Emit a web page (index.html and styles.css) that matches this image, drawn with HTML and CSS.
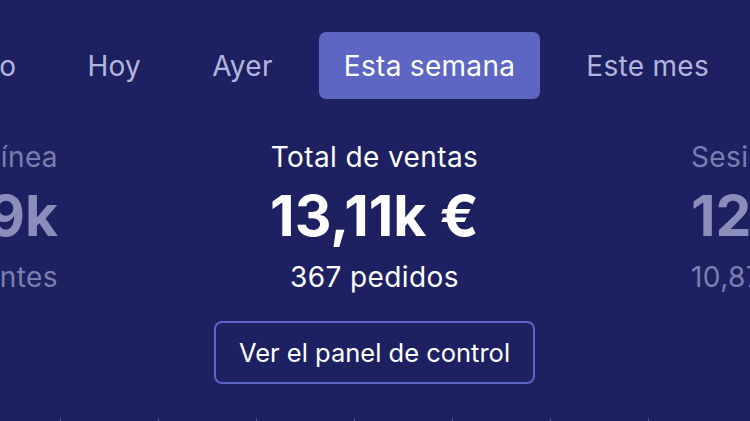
FILE: index.html
```html
<!DOCTYPE html>
<html lang="es">
<head>
    <meta charset="UTF-8">
    <meta name="viewport" content="width=device-width, initial-scale=1.0">
    <title>Resumen de ventas</title>
    <link rel="stylesheet" href="styles.css">
</head>
<body>
    <!-- Period tabs -->
    <nav class="tabs">
        <span class="tab">En vivo</span>
        <span class="tab">Hoy</span>
        <span class="tab">Ayer</span>
        <span class="tab active">Esta semana</span>
        <span class="tab">Este mes</span>
    </nav>

    <!-- Stats carousel -->
    <section class="stats">
        <div class="stat side left">
            <p class="label">Visitantes en línea</p>
            <p class="value">1,9k</p>
            <p class="sub">visitantes recientes</p>
        </div>
        <div class="stat main">
            <p class="label">Total de ventas</p>
            <p class="value">13,11k €</p>
            <p class="sub">367 pedidos</p>
            <button class="panel-btn">Ver el panel de control</button>
        </div>
        <div class="stat side right">
            <p class="label">Sesiones</p>
            <p class="value">12,4k</p>
            <p class="sub">10,87k visitantes</p>
        </div>
    </section>

    <!-- Chart axis -->
    <div class="axis">
        <span></span><span></span><span></span><span></span><span></span><span></span><span></span>
    </div>
</body>
</html>
```

FILE: styles.css
```css
body {
    margin: 0;
    height: 421px;
    overflow: hidden;
    background-color: #1d2161;
    font-family: Inter, "Open Sans", sans-serif;
    color: #ffffff;
}
p {
    margin: 0;
}
.tabs {
    display: flex;
    justify-content: flex-end;
    gap: 21px;
    padding: 0 16px 0 0;
    margin-top: 32px;
    overflow: hidden;
    white-space: nowrap;
}
.tab {
    flex: none;
    padding: 18px 25px 16px;
    font-size: 28px;
    line-height: 33px;
    letter-spacing: 0.3px;
    color: #b3b6dc;
    border-radius: 7px;
}
.tab.active {
    background-color: #5d67c3;
    color: #ffffff;
}
.stats {
    display: grid;
    grid-template-columns: 58px 1fr 59px;
    margin-top: 42px;
    white-space: nowrap;
}
.stat {
    display: flex;
    flex-direction: column;
    min-width: 0;
    overflow: hidden;
}
.stat.main {
    align-items: center;
}
.stat.left {
    align-items: flex-end;
}
.stat.right {
    align-items: flex-start;
}
.label, .sub {
    font-size: 28px;
    line-height: 33px;
    letter-spacing: 0.4px;
}
.value {
    margin-top: 10px;
    font-size: 57px;
    line-height: 64px;
    font-weight: 700;
}
.sub {
    margin-top: 13px;
}
.side .label, .side .sub {
    color: #7a7fb0;
}
.side .value {
    color: #8a8ebb;
}
.panel-btn {
    margin-top: 27px;
    padding: 0 23px;
    height: 63px;
    background: transparent;
    border: 2px solid #5b64c6;
    border-radius: 8px;
    color: #ffffff;
    font-family: inherit;
    font-size: 25.5px;
}
.axis {
    display: flex;
    gap: 97px;
    padding-left: 60px;
    margin-top: 34px;
}
.axis span {
    width: 1px;
    height: 4px;
    background-color: #4a5099;
}
```
